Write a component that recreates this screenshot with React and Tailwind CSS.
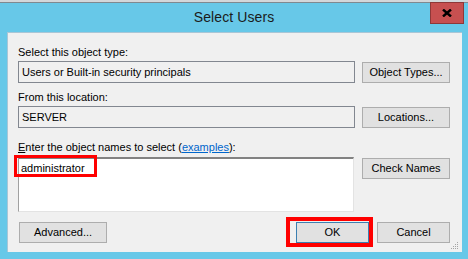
import React from "react";

const font = { fontFamily: '"Liberation Sans", Arial, sans-serif' };

const Btn = ({ children, className = "" }) => (
  <button
    className={`h-[21px] border border-[#adadad] bg-[#e1e1e1] text-[11px] leading-none text-black ${className}`}
  >
    {children}
  </button>
);

const ReadBox = ({ children }) => (
  <div className="h-[22px] w-[337px] border border-[#828790] bg-[#f0f0f0] pl-[3px] flex items-center text-[11px] text-black">
    {children}
  </div>
);

export default function App() {
  return (
    <div
      className="relative w-[468px] h-[259px] overflow-hidden bg-[#67c8e8] flex flex-col"
      style={font}
    >
      {/* strip of the window behind */}
      <div className="h-[3px] bg-[#d3d7da] border-b border-[#7f8990]" />

      {/* title bar */}
      <div className="h-[29px] flex items-center justify-center">
        <span className="text-[14px] text-[#1b1b1b] tracking-[0.1px]">Select Users</span>
      </div>

      {/* close button */}
      <div className="absolute left-[430px] top-[2px] w-[34px] h-[22px] bg-[#c75050] border border-[#8e3838] flex items-center justify-center">
        <svg width="10" height="8" viewBox="0 0 10 8">
          <path d="M1 0.5 L9 7.5 M9 0.5 L1 7.5" stroke="#000" strokeWidth="2.4" />
        </svg>
      </div>

      {/* client area */}
      <div className="ml-[7px] w-[455px] h-[220px] bg-[#f0f0f0] border-t border-l border-[#a9c6d6] pl-[10px] pr-[12px] pt-[12px] flex flex-col text-[11px] text-black relative">
        <div className="h-[14px] leading-[14px]">Select this object type:</div>
        <div className="mt-[2px] flex items-end gap-[7px]">
          <ReadBox>Users or Built-in security principals</ReadBox>
          <Btn className="w-[88px]">Object Types...</Btn>
        </div>

        <div className="mt-[7px] h-[14px] leading-[14px]">From this location:</div>
        <div className="mt-[2px] flex items-end gap-[7px]">
          <ReadBox>SERVER</ReadBox>
          <Btn className="w-[88px]">Locations...</Btn>
        </div>

        <div className="mt-[12px] h-[14px] leading-[14px]">
          <span className="underline">E</span>nter the object names to select (
          <span className="text-[#0066cc] underline">examples</span>):
        </div>
        <div className="mt-[3px] flex items-start gap-[8px]">
          <div className="w-[336px] h-[55px] bg-white border-t-2 border-l border-t-[#828282] border-l-[#a0a0a0] border-r border-b border-r-[#e3e3e3] border-b-[#e3e3e3] pl-[2px] pt-[2px] leading-[14px]">
            administrator
          </div>
          <Btn className="w-[88px] mt-[1px]">Check Names</Btn>
        </div>

        <div className="mt-[10px] flex items-start">
          <Btn className="w-[88px] ml-[1px]">Advanced...</Btn>
          <div className="flex-1" />
          <button className="h-[21px] w-[73px] border border-[#3c7fb1] bg-[#e1e1e1] text-[11px] leading-none text-black">
            OK
          </button>
          <Btn className="w-[73px] ml-[8px]">Cancel</Btn>
        </div>

        {/* resize grip */}
        <svg className="absolute right-[3px] bottom-[2px]" width="8" height="8" viewBox="0 0 8 8">
          {[
            [6, 0],
            [4, 2], [6, 2],
            [2, 4], [4, 4], [6, 4],
            [0, 6], [2, 6], [4, 6], [6, 6],
          ].map(([x, y]) => (
            <rect key={`${x}-${y}`} x={x} y={y} width="1" height="1" fill="#a5a5a5" />
          ))}
        </svg>
      </div>

      {/* red highlight annotations */}
      <div className="absolute left-[14px] top-[155px] w-[83px] h-[22px] border-[3px] border-[#ff0000]" />
      <div className="absolute left-[286px] top-[217px] w-[87px] h-[30px] border-[4px] border-[#ff0000]" />
    </div>
  );
}
